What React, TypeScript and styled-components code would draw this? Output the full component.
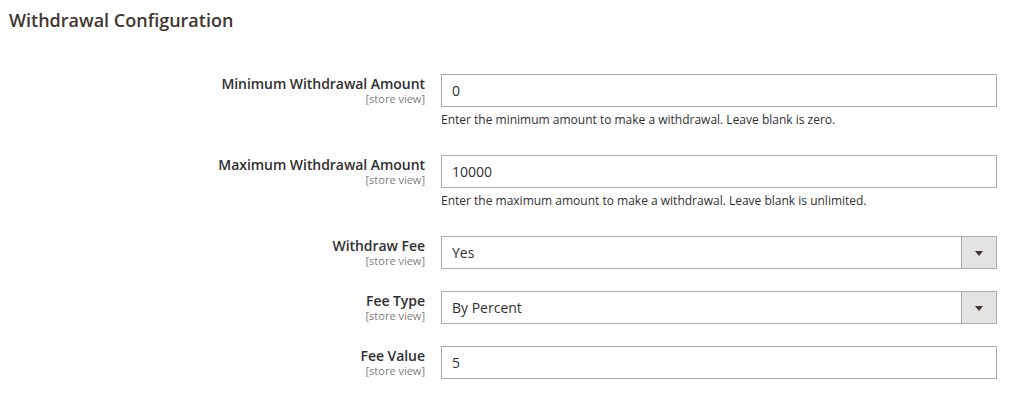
import React from "react";
import styled, { createGlobalStyle } from "styled-components";

const GlobalStyle = createGlobalStyle`
  html, body {
    margin: 0;
    padding: 0;
    background: #ffffff;
    font-family: "Open Sans", "Liberation Sans", sans-serif;
    color: #303030;
  }
`;

const Section = styled.div`
  width: 1018px;
`;

const Title = styled.h2`
  margin: 0 0 43px;
  padding: 9px 9px 0;
  font-size: 18px;
  line-height: 22px;
  font-weight: 600;
  color: #41362f;
`;

const Rows = styled.div`
  display: flex;
  flex-direction: column;
  gap: 22px;
`;

const Row = styled.div`
  display: grid;
  grid-template-columns: 425px 556px;
  column-gap: 16px;
  align-items: start;
`;

const LabelCell = styled.div`
  display: flex;
  flex-direction: column;
  align-items: flex-end;
  gap: 1px;
  padding-top: 2px;
  text-align: right;
`;

const LabelText = styled.label`
  font-size: 14px;
  line-height: 16px;
  font-weight: 600;
  letter-spacing: -0.05px;
  color: #303030;
`;

const Scope = styled.span`
  font-size: 11px;
  line-height: 12px;
  color: #808080;
`;

const ValueCell = styled.div`
  display: flex;
  flex-direction: column;
`;

const Input = styled.div`
  box-sizing: border-box;
  height: 33px;
  border: 1px solid #adadad;
  background: #ffffff;
  padding: 6px 10px;
  font-size: 14px;
  line-height: 19px;
  color: #303030;
`;

const Select = styled.div`
  box-sizing: border-box;
  height: 33px;
  border: 1px solid #adadad;
  background: #ffffff;
  display: flex;
  align-items: stretch;
`;

const SelectValue = styled.div`
  flex: 1;
  padding: 6px 10px;
  font-size: 14px;
  line-height: 19px;
  color: #303030;
`;

const SelectButton = styled.div`
  width: 34px;
  border-left: 1px solid #adadad;
  background: #e3e3e3;
  display: flex;
  align-items: center;
  justify-content: center;
`;

const Arrow = styled.span`
  width: 0;
  height: 0;
  border-left: 4px solid transparent;
  border-right: 4px solid transparent;
  border-top: 5px solid #41362f;
  margin-top: 1px;
`;

const Note = styled.div`
  margin: 5px 0 5px;
  font-size: 12px;
  line-height: 16px;
  color: #303030;
`;

interface FieldProps {
  label: string;
  value: string;
  select?: boolean;
  note?: string;
}

const Field = ({ label, value, select, note }: FieldProps) => (
  <Row>
    <LabelCell>
      <LabelText>{label}</LabelText>
      <Scope>[store view]</Scope>
    </LabelCell>
    <ValueCell>
      {select ? (
        <Select>
          <SelectValue>{value}</SelectValue>
          <SelectButton>
            <Arrow />
          </SelectButton>
        </Select>
      ) : (
        <Input>{value}</Input>
      )}
      {note ? <Note>{note}</Note> : null}
    </ValueCell>
  </Row>
);

export default function App() {
  return (
    <Section>
      <GlobalStyle />
      <Title>Withdrawal Configuration</Title>
      <Rows>
        <Field
          label="Minimum Withdrawal Amount"
          value="0"
          note="Enter the minimum amount to make a withdrawal. Leave blank is zero."
        />
        <Field
          label="Maximum Withdrawal Amount"
          value="10000"
          note="Enter the maximum amount to make a withdrawal. Leave blank is unlimited."
        />
        <Field label="Withdraw Fee" value="Yes" select />
        <Field label="Fee Type" value="By Percent" select />
        <Field label="Fee Value" value="5" />
      </Rows>
    </Section>
  );
}
